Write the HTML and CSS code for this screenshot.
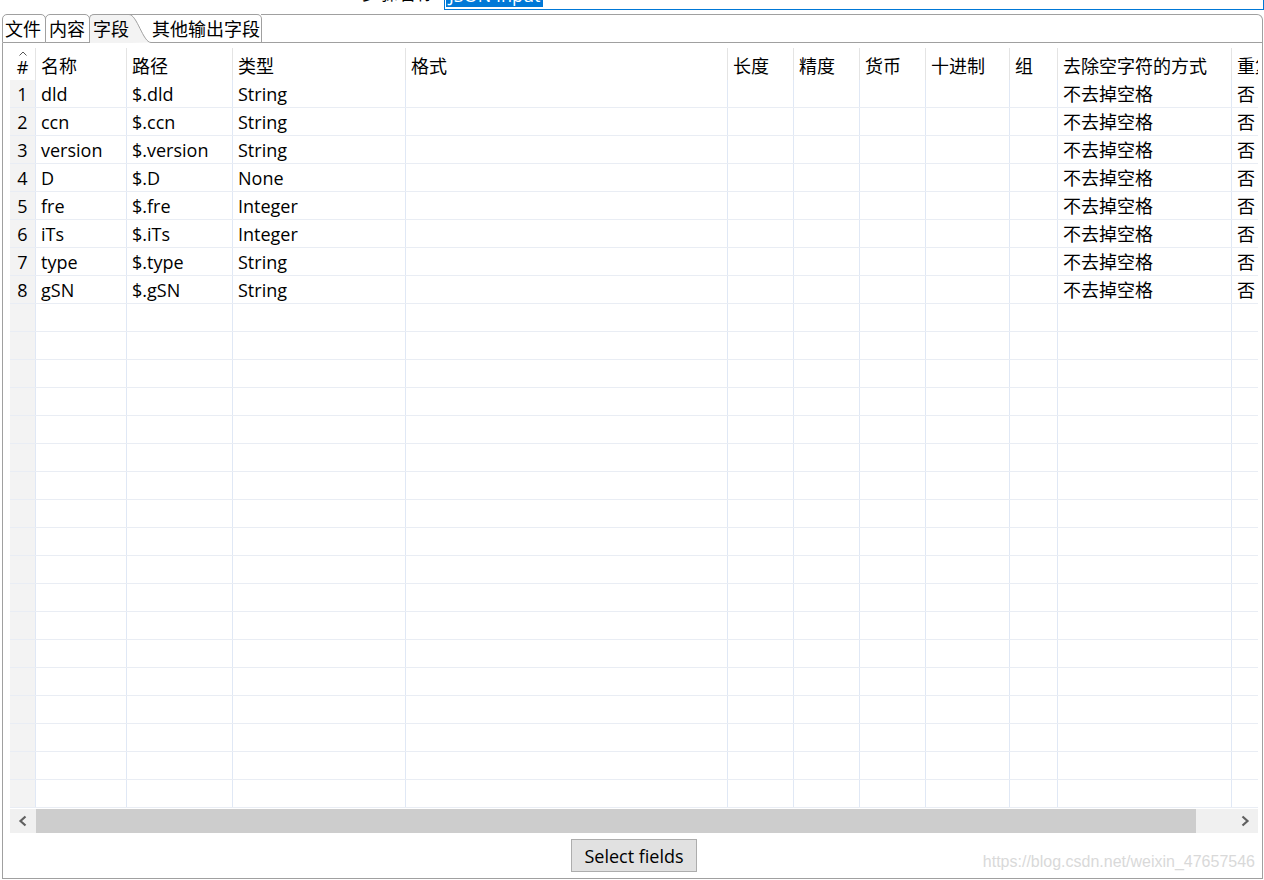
FILE: index.html
```html
<!DOCTYPE html>
<html lang="zh-CN">
<head>
    <meta charset="UTF-8">
    <title>JSON Input - 字段</title>
    <link rel="stylesheet" href="styles.css">
</head>
<body>
    <div class="step">
        <label class="step-label">步骤名称</label>
        <div class="step-input"><span class="selected">JSON Input</span></div>
    </div>

    <div class="folder">
        <div class="tabs">
            <span class="tab">文件</span>
            <span class="tab">内容</span>
            <span class="tab active">字段</span>
            <svg class="tab-curve" width="22" height="29" viewBox="0 0 22 29">
                <path d="M0 0.5 C 8 0.5, 14 28.5, 22 28.5 L0 29 Z" fill="#f3f3f3"/>
                <path d="M0 0.5 H22" stroke="#a0a0a0" fill="none"/>
                <path d="M0 0.5 C 8 0.5, 14 28.5, 22 28.5" stroke="#a0a0a0" fill="none"/>
            </svg>
            <span class="tab after">其他输出字段</span>
            <span class="tab-fill"></span>
        </div>

        <div class="panel">
            <div class="table" id="fields">
                <div class="row head">
                    <span class="num">
                        <svg width="8" height="5" viewBox="0 0 8 5"><polyline points="0.5,4.5 4,1 7.5,4.5" fill="none" stroke="#555" stroke-width="1"/></svg>
                        #
                    </span>
                    <span>名称</span><span>路径</span><span>类型</span><span>格式</span><span>长度</span><span>精度</span><span>货币</span><span>十进制</span><span>组</span><span>去除空字符的方式</span><span>重复</span>
                </div>
                <div class="row"><span class="num">1</span><span>dld</span><span>$.dld</span><span>String</span><span></span><span></span><span></span><span></span><span></span><span></span><span>不去掉空格</span><span>否</span></div>
                <div class="row"><span class="num">2</span><span>ccn</span><span>$.ccn</span><span>String</span><span></span><span></span><span></span><span></span><span></span><span></span><span>不去掉空格</span><span>否</span></div>
                <div class="row"><span class="num">3</span><span>version</span><span>$.version</span><span>String</span><span></span><span></span><span></span><span></span><span></span><span></span><span>不去掉空格</span><span>否</span></div>
                <div class="row"><span class="num">4</span><span>D</span><span>$.D</span><span>None</span><span></span><span></span><span></span><span></span><span></span><span></span><span>不去掉空格</span><span>否</span></div>
                <div class="row"><span class="num">5</span><span>fre</span><span>$.fre</span><span>Integer</span><span></span><span></span><span></span><span></span><span></span><span></span><span>不去掉空格</span><span>否</span></div>
                <div class="row"><span class="num">6</span><span>iTs</span><span>$.iTs</span><span>Integer</span><span></span><span></span><span></span><span></span><span></span><span></span><span>不去掉空格</span><span>否</span></div>
                <div class="row"><span class="num">7</span><span>type</span><span>$.type</span><span>String</span><span></span><span></span><span></span><span></span><span></span><span></span><span>不去掉空格</span><span>否</span></div>
                <div class="row"><span class="num">8</span><span>gSN</span><span>$.gSN</span><span>String</span><span></span><span></span><span></span><span></span><span></span><span></span><span>不去掉空格</span><span>否</span></div>
            </div>

            <div class="hscroll">
                <span class="arrow">
                    <svg width="10" height="12" viewBox="0 0 10 12"><polyline points="7.5,1.5 2.5,6 7.5,10.5" fill="none" stroke="#606060" stroke-width="2.2"/></svg>
                </span>
                <span class="thumb"></span>
                <span class="track"></span>
                <span class="arrow">
                    <svg width="10" height="12" viewBox="0 0 10 12"><polyline points="2.5,1.5 7.5,6 2.5,10.5" fill="none" stroke="#606060" stroke-width="2.2"/></svg>
                </span>
            </div>

            <div class="actions">
                <button class="select-btn">Select fields</button>
                <span class="watermark">https://blog.csdn.net/weixin_47657546</span>
            </div>
        </div>
    </div>

    <script>
        // Fill the rest of the grid with empty rows
        const table = document.getElementById('fields');
        for (let i = 0; i < 18; i++) {
            const row = document.createElement('div');
            row.className = 'row';
            row.innerHTML = '<span class="num"></span>' + '<span></span>'.repeat(11);
            table.appendChild(row);
        }
    </script>
</body>
</html>
```

FILE: styles.css
```css
body {
    margin: 0;
    font-family: "Open Sans", "Noto Sans CJK SC", sans-serif;
    font-size: 18px;
    color: #000;
    background-color: #fff;
    overflow: hidden;
}

/* step name row, scrolled mostly out of view */
.step {
    display: flex;
    align-items: flex-end;
    height: 30px;
    margin-top: -20px;
}
.step-label {
    margin-left: 362px;
    width: 82px;
    line-height: 24px;
    margin-bottom: 5px;
}
.step-input {
    flex: 1;
    height: 30px;
    box-sizing: border-box;
    border: 1px solid #0078d7;
    padding: 0 1px;
}
.selected {
    display: inline-block;
    background-color: #0078d7;
    color: #fff;
    line-height: 24px;
    padding: 0 3px;
    vertical-align: top;
    position: relative;
    top: 2px;
    overflow: hidden;
}

/* tab folder */
.folder {
    margin: 4px 1px 0 2px;
}
.tabs {
    display: flex;
    height: 29px;
}
.tab {
    box-sizing: border-box;
    height: 29px;
    border: 1px solid #a0a0a0;
    border-radius: 5px 5px 0 0;
    padding: 1px 4px 0 2px;
    line-height: 26px;
    background-color: #fff;
    white-space: nowrap;
}
.tab + .tab {
    margin-left: -1px;
    padding-left: 3px;
}
.tab.active {
    background-color: #f3f3f3;
    border-right: none;
    border-bottom: none;
    border-top-right-radius: 0;
    padding-right: 0;
}
.tab-curve {
    display: block;
    flex-shrink: 0;
}
.tab.after {
    margin-left: 0;
    border-left: none;
    border-top-left-radius: 0;
    padding: 1px 1px 0 1px;
    background: none;
}
.tab-fill {
    flex: 1;
    margin-left: -1px;
    border-top: 1px solid #a0a0a0;
    border-bottom: 1px solid #a0a0a0;
    border-right: 1px solid #a0a0a0;
    border-top-right-radius: 6px;
}

.panel {
    border: 1px solid #a0a0a0;
    border-top: none;
    padding: 5px 4px 6px 7px;
}

/* field grid */
.table {
    overflow: hidden;
}
.row {
    display: grid;
    grid-template-columns: 25px 91px 106px 173px 322px 66px 66px 66px 84px 48px 174px 80px;
    height: 28px;
    box-sizing: border-box;
    border-bottom: 1px solid #e9edf4;
}
.row > span {
    border-left: 1px solid #e0e8f5;
    padding: 1px 0 0 5px;
    line-height: 26px;
    white-space: nowrap;
    overflow: hidden;
}
.row > .num {
    border-left: none;
    padding-left: 0;
    text-align: center;
    background-color: #f3f3f3;
}
.row.head {
    height: 32px;
    border-bottom: none;
}
.row.head > span {
    line-height: 28px;
    padding-top: 4px;
    border-left-color: #e4e4e4;
}
.row.head > .num {
    background-color: #fff;
    padding-top: 0;
    display: flex;
    flex-direction: column;
    align-items: center;
    line-height: 22px;
}
.row.head > .num svg {
    margin-top: 3px;
}

/* horizontal scrollbar */
.hscroll {
    display: flex;
    height: 24px;
    margin-top: 1px;
    background-color: #f0f0f0;
}
.arrow {
    width: 26px;
    display: flex;
    align-items: center;
    justify-content: center;
}
.thumb {
    width: 1160px;
    background-color: #cdcdcd;
}
.track {
    flex: 1;
}

.actions {
    display: grid;
    grid-template-columns: 1fr auto 1fr;
    margin-top: 6px;
}
.select-btn {
    grid-column: 2;
    width: 126px;
    height: 33px;
    background-color: #e1e1e1;
    border: 1px solid #adadad;
    font-family: "Open Sans", sans-serif;
    font-size: 18px;
    color: #000;
    padding: 0;
}
.watermark {
    justify-self: end;
    align-self: end;
    margin-right: 3px;
    margin-bottom: 1px;
    font-family: "Liberation Sans", sans-serif;
    font-size: 16px;
    line-height: 18px;
    color: #d9d9d9;
}
```
